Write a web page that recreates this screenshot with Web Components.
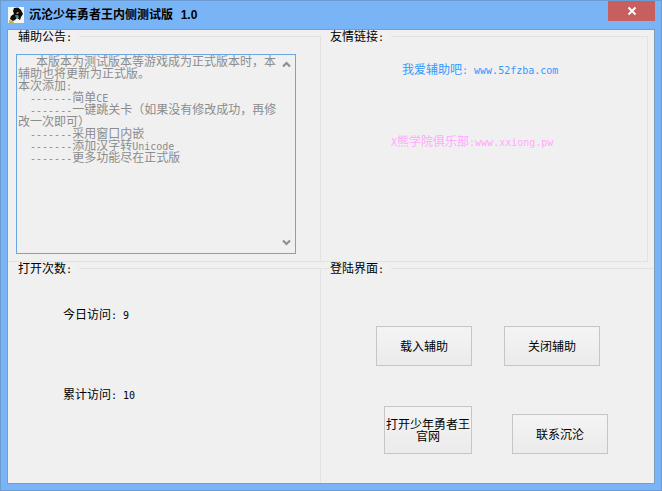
<!DOCTYPE html>
<html>
<head>
<meta charset="utf-8">
<title>沉沦少年勇者王内侧测试版</title>
<style>
  html, body { margin: 0; padding: 0; }
  body {
    width: 662px;
    height: 491px;
    overflow: hidden;
    font: 12px/12px "Noto Sans CJK SC", monospace;
  }
  /* latin runs: half the CJK cell, like the old bitmap font */
  .en { font: 10px/0 "DejaVu Sans Mono", monospace; white-space: pre; }
</style>
</head>
<body>
<app-window>
  <title-bar slot="title">沉沦少年勇者王内侧测试版&nbsp;&nbsp;<span style="margin-left:1px">1.0</span></title-bar>

  <group-box label="辅助公告" edges="right bottom">
    <notice-box><span class="en">   </span>本版本为测试版本等游戏成为正式版本时，本
辅助也将更新为正式版。
本次添加<span class="en">:</span>
<span class="en">  -------</span>简单<span class="en">CE</span>
<span class="en">  -------</span>一键跳关卡（如果没有修改成功，再修
改一次即可）
<span class="en">  -------</span>采用窗口内嵌
<span class="en">  -------</span>添加汉字转<span class="en">Unicode</span>
<span class="en">  -------</span>更多功能尽在正式版</notice-box>
  </group-box>

  <group-box label="友情链接" edges="right bottom" inset="6" indent="9">
    <link-list>
      <span style="color:#3399ff;margin-left:81px">我爱辅助吧<span class="en">: www.52fzba.com</span></span>
      <span style="color:#ffaaff;margin-left:70px"><span class="en">X</span>熊学院俱乐部<span class="en">:www.xxiong.pw</span></span>
    </link-list>
  </group-box>

  <group-box label="打开次数" edges="right" over="8">
    <visit-stats>
      <span>今日访问<span class="en">: 9</span></span>
      <span>累计访问<span class="en">: 10</span></span>
    </visit-stats>
  </group-box>

  <group-box label="登陆界面" indent="9">
    <button-panel>
      <div class="row first">
        <win-button>载入辅助</win-button>
        <win-button>关闭辅助</win-button>
      </div>
      <div class="row second">
        <win-button style="width:88px;height:48px">打开少年勇者王官网</win-button>
        <win-button>联系沉沦</win-button>
      </div>
    </button-panel>
  </group-box>
</app-window>

<script>
// window frame: blue border, title slot, 2x2 grid of groups
class AppWindow extends HTMLElement {
  constructor() {
    super();
    this.attachShadow({ mode: 'open' }).innerHTML = `
      <style>
        :host {
          display: flex;
          flex-direction: column;
          box-sizing: border-box;
          width: 662px;
          height: 491px;
          background: #79b5f6;
          border: 1px solid #6c9bd2;
          padding: 0 7px 7px;
        }
        .client {
          flex: 1;
          display: grid;
          grid-template-columns: 313px 333px;
          grid-template-rows: 232px 221px;
          background: #f0f0f0;
          box-shadow: 0 0 0 1px #7f9db9;
        }
      </style>
      <slot name="title"></slot>
      <div class="client"><slot></slot></div>`;
  }
}

class TitleBar extends HTMLElement {
  constructor() {
    super();
    this.attachShadow({ mode: 'open' }).innerHTML = `
      <style>
        :host {
          display: flex;
          align-items: flex-start;
          height: 29px;
          color: #000;
          font: bold 12px/12px "Liberation Sans", "Noto Sans CJK SC", sans-serif;
        }
        svg { margin-top: 6px; flex: none; }
        .text { margin: 8px 0 0 5px; white-space: nowrap; flex: 1; }
        .close {
          width: 47px;
          height: 20px;
          margin-right: -1px;
          background: #c75f5f;
          display: flex;
          align-items: center;
          justify-content: center;
          flex: none;
        }
      </style>
      <svg width="16" height="16" viewBox="0 0 16 16">
        <rect width="16" height="16" fill="#f6f6ee"/>
        <path d="M6 1 L10 0.5 L13 3 L15 7 L13 10 L12 13 L9 11 L7 13 L5 14 L2 12 L3 9 L6 7 L5 4 Z" fill="#0c0c0c"/>
        <path d="M7 8 L10 8 L11 11 L8 11 Z" fill="#3f8f88"/>
        <path d="M9 5 L11 5 L10 7 L8 7 Z" fill="#b8743a"/>
        <path d="M1 13 L5 14 L6 16 L1 16 Z" fill="#c9b53a"/>
      </svg>
      <span class="text"><slot></slot></span>
      <span class="close">
        <svg style="margin:0" width="10" height="10" viewBox="0 0 10 10">
          <path d="M1.5 1.5 L8.5 8.5 M8.5 1.5 L1.5 8.5" stroke="#fff" stroke-width="2" fill="none"/>
        </svg>
      </span>`;
  }
}

// etched group box: the label sits in the top line, only some edges are drawn
class GroupBox extends HTMLElement {
  constructor() {
    super();
    this.attachShadow({ mode: 'open' });
  }

  connectedCallback() {
    const edges = (this.getAttribute('edges') || '').split(' ');
    const indent = this.getAttribute('indent') || 10;
    const inset = this.getAttribute('inset') || 0;
    const over = this.getAttribute('over') || 0;
    const line = 'linear-gradient(#e2e2e2, #e2e2e2)';
    const layers = [];
    if (edges.includes('right')) layers.push(`${line} no-repeat right 0 top 6px / 1px calc(100% - 6px)`);
    if (edges.includes('bottom')) layers.push(`${line} no-repeat left 0 bottom 0 / 100% 1px`);

    this.shadowRoot.innerHTML = `
      <style>
        :host {
          display: flex;
          flex-direction: column;
          min-width: 0;
          margin-right: ${inset}px;
          background: ${layers.join(', ') || 'none'};
        }
        .head {
          display: flex;
          height: 12px;
          padding-left: ${indent}px;
          margin-right: -${over}px;
          gap: 1px;
          color: #000;
        }
        .colon { font: 10px/0 "DejaVu Sans Mono", monospace; white-space: pre; }
        .line { flex: 1; height: 1px; margin-top: 6px; background: #e2e2e2; }
      </style>
      <div class="head">
        <span>${this.getAttribute('label')}<span class="colon">: </span></span>
        <div class="line"></div>
      </div>
      <slot></slot>`;
  }
}

class NoticeBox extends HTMLElement {
  constructor() {
    super();
    this.attachShadow({ mode: 'open' }).innerHTML = `
      <style>
        :host {
          display: flex;
          box-sizing: border-box;
          width: 280px;
          height: 200px;
          margin: 12px 0 0 8px;
          padding: 0 4px 0 1px;
          border: 1px solid #6ca6e2;
          color: #8c8c8c;
        }
        .text { flex: 1; min-width: 0; white-space: pre; }
        .bar {
          width: 9px;
          display: flex;
          flex-direction: column;
          justify-content: space-between;
          padding: 6px 0 7px;
        }
        svg { display: block; }
      </style>
      <div class="text"><slot></slot></div>
      <div class="bar">
        <svg width="9" height="7" viewBox="0 0 9 7"><path d="M1 5.5 L4.5 2 L8 5.5" stroke="#8f8f8f" stroke-width="2.2" fill="none"/></svg>
        <svg width="9" height="7" viewBox="0 0 9 7"><path d="M1 1.5 L4.5 5 L8 1.5" stroke="#8f8f8f" stroke-width="2.2" fill="none"/></svg>
      </div>`;
  }
}

class LinkList extends HTMLElement {
  constructor() {
    super();
    this.attachShadow({ mode: 'open' }).innerHTML = `
      <style>
        :host {
          display: flex;
          flex-direction: column;
          align-items: flex-start;
          gap: 60px;
          padding-top: 21px;
          white-space: nowrap;
        }
      </style>
      <slot></slot>`;
  }
}

class VisitStats extends HTMLElement {
  constructor() {
    super();
    this.attachShadow({ mode: 'open' }).innerHTML = `
      <style>
        :host {
          display: flex;
          flex-direction: column;
          gap: 68px;
          padding: 34px 0 0 55px;
          color: #000;
        }
      </style>
      <slot></slot>`;
  }
}

class ButtonPanel extends HTMLElement {
  constructor() {
    super();
    // rows live in light DOM, so the row rules are applied through ::slotted
    this.attachShadow({ mode: 'open' }).innerHTML = `
      <style>
        :host {
          display: flex;
          flex-direction: column;
          gap: 40px;
          padding-top: 52px;
        }
        ::slotted(.row) { display: flex; align-items: flex-end; }
        ::slotted(.first) { margin-left: 55px; gap: 32px; }
        ::slotted(.second) { margin-left: 63px; gap: 40px; }
      </style>
      <slot></slot>`;
  }
}

class WinButton extends HTMLElement {
  constructor() {
    super();
    this.attachShadow({ mode: 'open' }).innerHTML = `
      <style>
        :host {
          display: flex;
          align-items: center;
          justify-content: center;
          box-sizing: border-box;
          width: 96px;
          height: 40px;
          border: 1px solid #c6c6c6;
          background: linear-gradient(#f4f4f4, #ebebeb);
          color: #000;
          text-align: center;
        }
      </style>
      <slot></slot>`;
  }
}

customElements.define('app-window', AppWindow);
customElements.define('title-bar', TitleBar);
customElements.define('group-box', GroupBox);
customElements.define('notice-box', NoticeBox);
customElements.define('link-list', LinkList);
customElements.define('visit-stats', VisitStats);
customElements.define('button-panel', ButtonPanel);
customElements.define('win-button', WinButton);
</script>
</body>
</html>
